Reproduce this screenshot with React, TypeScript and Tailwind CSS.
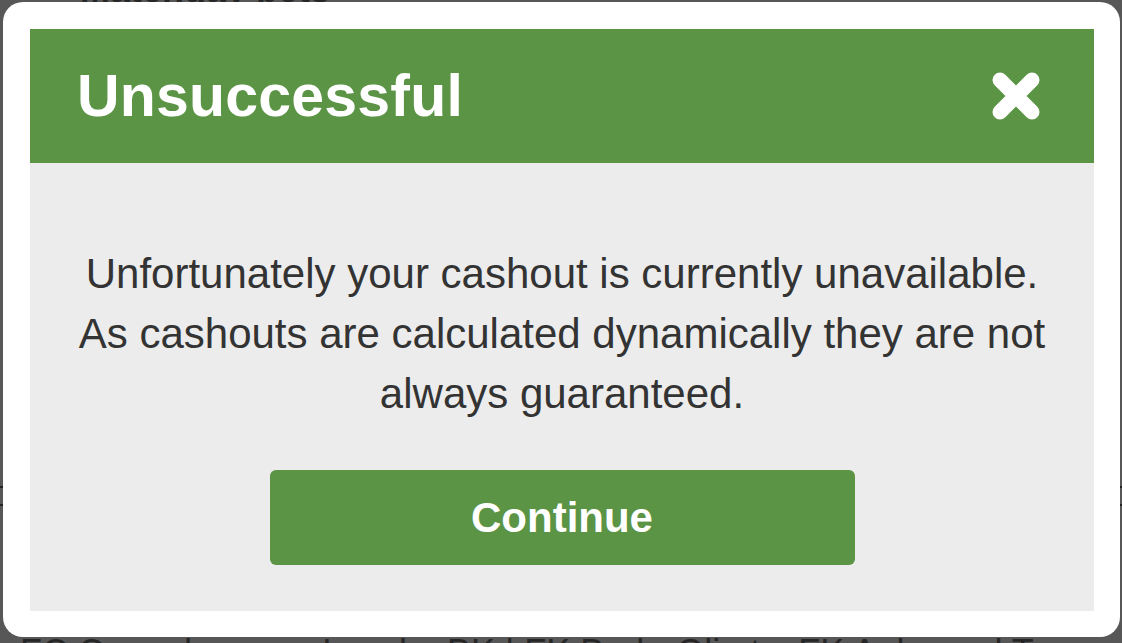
function CloseIcon() {
  return (
    <svg width="48" height="48" viewBox="0 0 48 48" aria-hidden="true">
      <path d="M8 8 L40 40 M40 8 L8 40" stroke="#ffffff" strokeWidth="15" strokeLinecap="round" fill="none" />
    </svg>
  );
}

export default function App() {
  return (
    <div
      className="relative w-[1122px] h-[643px] overflow-hidden bg-[#575757]"
      style={{ fontFamily: '"Liberation Sans", Arial, Helvetica, sans-serif' }}
    >
      {/* page behind the overlay */}
      <div className="flex flex-col h-full text-[#262626]">
        <div className="pl-[80px] -mt-[30px] text-[36px] font-bold leading-[40px]">Matchday bets</div>
        <div className="mt-[476px] border-t-2 border-[#222]" />
        <div className="mt-[16px] border-t-2 border-[#222]" />
        <div className="mt-auto -mb-[30px] pl-[20px] text-[36px] leading-[40px] whitespace-nowrap">
          FC Copenhagen v Lyngby BK | FK Bodø Glimt v FK Aalesund Tr
        </div>
      </div>

      {/* modal */}
      <div className="absolute left-[3px] top-[2px] w-[1117px] h-[635px] bg-white rounded-[20px] p-[27px] pr-[26px] pb-[26px] flex flex-col">
        <div className="h-[134px] bg-[#5b9445] flex items-center justify-between pl-[47px] pr-[54px]">
          <h1 className="text-[59px] font-bold text-white leading-none tracking-[0.2px]">Unsuccessful</h1>
          <button className="flex items-center justify-center">
            <CloseIcon />
          </button>
        </div>
        <div className="flex-1 bg-[#ececec] flex flex-col items-center pt-[81px]">
          <p className="text-[42px] leading-[60px] text-[#333333] text-center">
            Unfortunately your cashout is currently unavailable.
            <br />
            As cashouts are calculated dynamically they are not
            <br />
            always guaranteed.
          </p>
          <button className="mt-[46px] w-[585px] h-[95px] rounded-[6px] bg-[#5b9445] text-white text-[42px] font-bold flex items-center justify-center">
            Continue
          </button>
        </div>
      </div>
    </div>
  );
}
